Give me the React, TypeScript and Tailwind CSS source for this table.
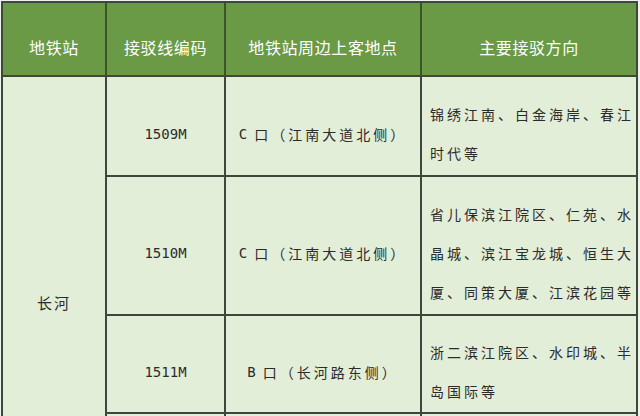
import React from "react";

const cjk = { fontFamily: '"Noto Sans CJK SC", "Noto Sans", sans-serif' };
const mono = { fontFamily: '"DejaVu Sans Mono", "Noto Sans CJK SC", monospace' };

const cols = "grid-cols-[102px_117px_194px_214px]";

function HeadCell({ children }: { children: React.ReactNode }) {
  return (
    <div className="bg-[#6a9a46] flex items-center justify-center pt-[16px] text-white text-[16px] tracking-[0.6px]" style={cjk}>
      {children}
    </div>
  );
}

const rows = [
  { code: "1509M", gate: "C", place: "江南大道北侧", dir: ["锦绣江南、白金海岸、春江", "时代等"] },
  { code: "1510M", gate: "C", place: "江南大道北侧", dir: ["省儿保滨江院区、仁苑、水", "晶城、滨江宝龙城、恒生大", "厦、同策大厦、江滨花园等"] },
  { code: "1511M", gate: "B", place: "长河路东侧", dir: ["浙二滨江院区、水印城、半", "岛国际等"] },
];

export default function App() {
  return (
    <div className="w-[640px] h-[416px] overflow-hidden bg-[#eef4e9]">
      <div className="ml-px mt-px w-[637px] bg-[#3f463c] flex flex-col gap-[2px] pt-[2px] pl-[2px] pr-[2px]">
        <div className={`grid ${cols} gap-[2px] bg-[#3a5629] h-[72px]`}>
          <HeadCell>地铁站</HeadCell>
          <HeadCell>接驳线编码</HeadCell>
          <HeadCell>地铁站周边上客地点</HeadCell>
          <HeadCell>主要接驳方向</HeadCell>
        </div>
        <div className={`grid ${cols} grid-rows-[98px_137px_96px_100px] gap-[2px] text-[#2b2b2b] text-[14px]`}>
          <div className="row-span-4 bg-[#e3eed9] flex items-center justify-center pt-[16px] tracking-[2px] text-[15px]" style={cjk}>
            长河
          </div>
          {rows.map((r) => (
            <React.Fragment key={r.code}>
              <div className="bg-[#e3eed9] flex items-center justify-center pt-[16px] text-[14px]" style={mono}>
                {r.code}
              </div>
              <div className="bg-[#e3eed9] flex items-center justify-center pt-[16px] tracking-[3px]" style={cjk}>
                <span style={mono}>{r.gate}</span>
                <span className="ml-[4px]">口（{r.place}）</span>
              </div>
              <div className="bg-[#e3eed9] flex flex-col justify-center pt-[16px] pl-[8px] tracking-[3px] leading-[39px]" style={cjk}>
                {r.dir.map((d) => (
                  <div key={d} className="whitespace-nowrap">{d}</div>
                ))}
              </div>
            </React.Fragment>
          ))}
          <div className="bg-[#e3eed9]" />
          <div className="bg-[#e3eed9]" />
          <div className="bg-[#e3eed9]" />
        </div>
      </div>
    </div>
  );
}
